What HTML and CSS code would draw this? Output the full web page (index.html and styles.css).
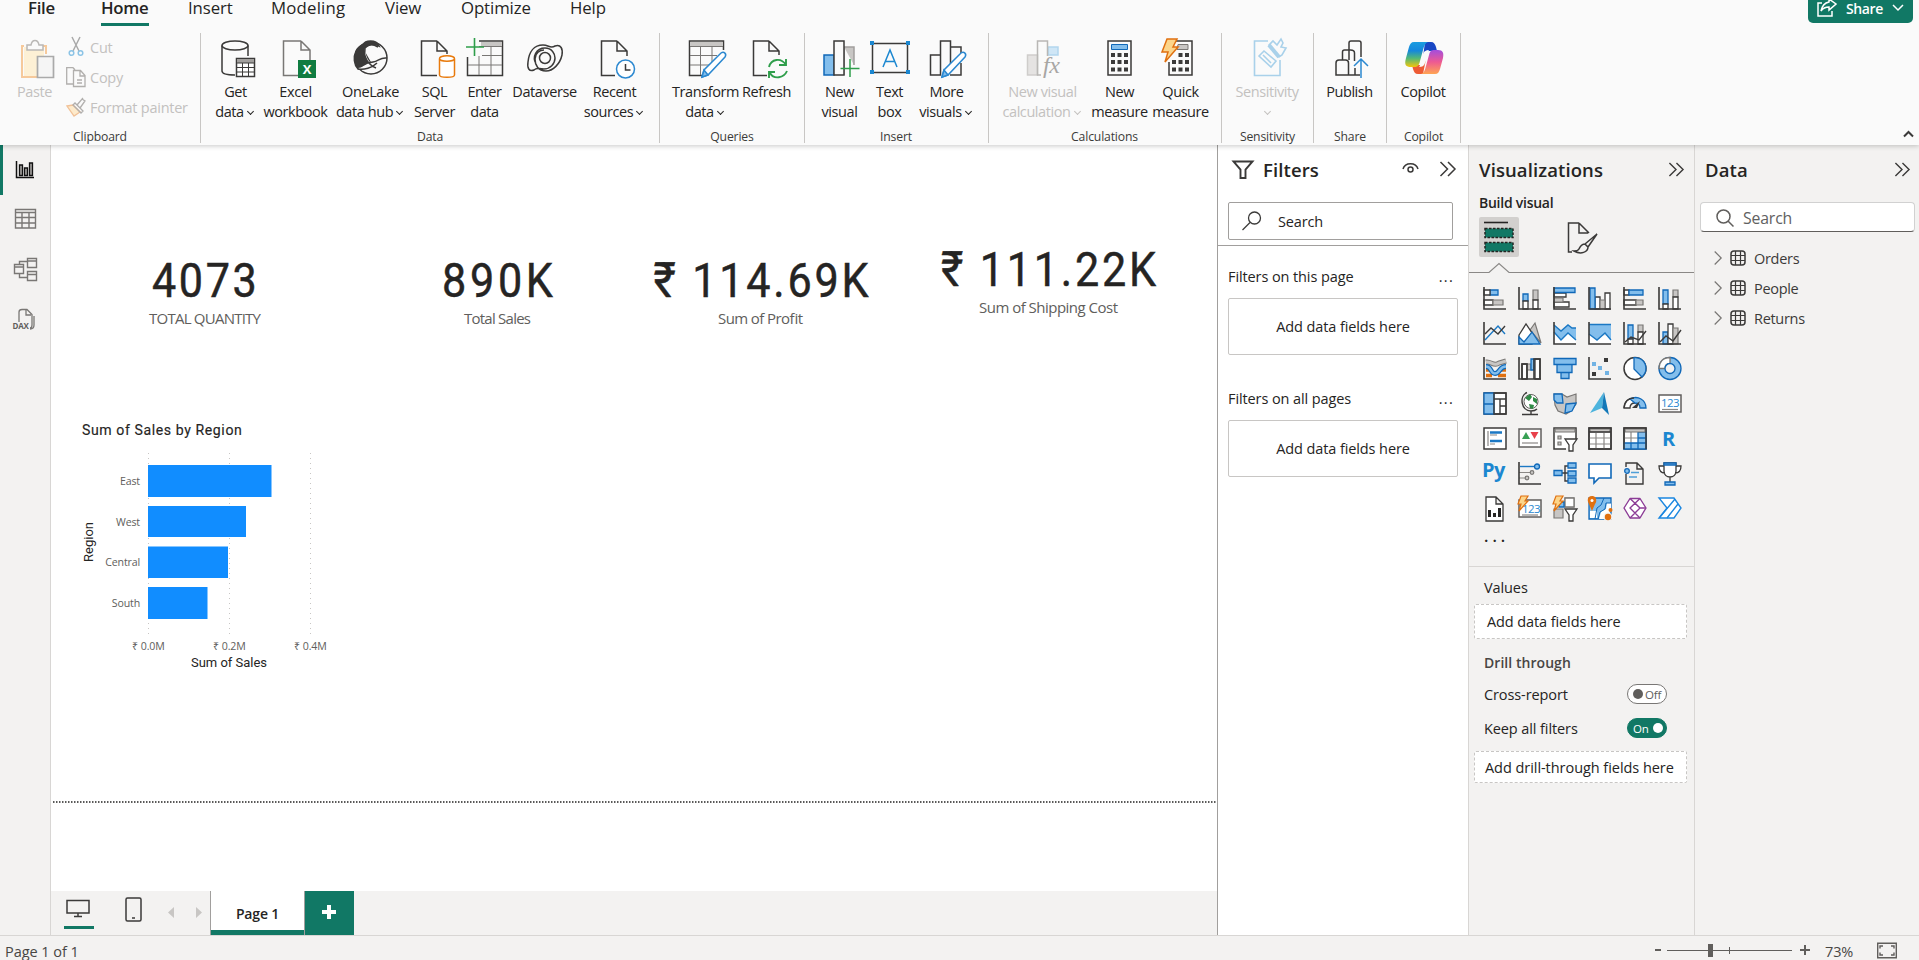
FILE: index.html
```html
<!DOCTYPE html>
<html lang="en">
<head>
<meta charset="utf-8">
<title>Power BI Desktop</title>
<link rel="stylesheet" href="styles.css">
</head>
<body>
<div class="app">
  <header class="ribbon">
    <div class="topline">
      <nav class="tabs">
        <a class="tab t-file">File</a><a class="tab t-home">Home</a><a class="tab t-insert">Insert</a><a class="tab t-model">Modeling</a><a class="tab t-view">View</a><a class="tab t-opt">Optimize</a><a class="tab t-help">Help</a>
      </nav>
      <button class="share">
        <svg width="20" height="18" viewBox="0 0 20 18" class="ln wt"><path d="M5 4H1v13h14v-5M12 0l7 5-7 6V8C8 8 6 9 4 12 5 7 7 4 12 3Z"/></svg>
        <span>Share</span>
        <svg width="12" height="8" viewBox="0 0 12 8" class="ln wt"><path d="M1 1l5 5 5-5"/></svg>
      </button>
    </div>
    <div class="groups">
      <section class="group g-clip">
        <div class="clip">
          <div class="btn off b-paste">
            <svg class="ico" viewBox="0 0 38 38"><path d="M8 6H6v31h16M27 6h3v8" fill="none" stroke="#f6c99b" stroke-width="2"/><path d="M8 7h20v9h-7v20H8Z" fill="#fdf0d5"/><path d="M11 10V5h4c1-6 7-6 8 0h4v5Z" fill="#fafafa" stroke="#b9b7b5" stroke-width="1.5"/><path d="M21.500 16.500h16v21h-16Z" fill="#f5f5f5" stroke="#aaa" stroke-width="1.700"/></svg>
            <span>Paste</span>
          </div>
          <div class="mini">
            <div class="row"><svg width="20" height="20" viewBox="0 0 20 20" fill="none"><path d="M6 0l7 14M14 0L7 14" stroke="#aaa" stroke-width="1.500"/><circle cx="5.500" cy="16" r="2.300" stroke="#8cc4e6" stroke-width="1.500"/><circle cx="14.500" cy="16" r="2.300" stroke="#8cc4e6" stroke-width="1.500"/></svg><span>Cut</span></div>
            <div class="row"><svg width="20" height="20" viewBox="0 0 20 20" fill="none" stroke="#b1afad" stroke-width="1.300"><path d="M7 17H.700V.700H7l2 2M7.500 3.500h7l4.500 5v11H7.500ZM14 3.500V9h5M11 13h5M11 16h5"/></svg><span>Copy</span></div>
            <div class="row"><svg width="20" height="20" viewBox="0 0 20 20" fill="none" stroke="#b1afad" stroke-width="1.300"><path d="M1 9l6-1 7 7-6 4Z" fill="#fdeacb" stroke="#f1c197"/><path d="M7 8l2-2 8 8-2 2ZM11 8l5-6 3 2-5 7M16 2l1-1"/></svg><span>Format painter</span></div>
          </div>
        </div>
        <div class="cap">Clipboard</div>
      </section>
      <section class="group g-data">
        <div class="btns">
          <div class="btn w48"><svg class="ico ln" viewBox="0 0 38 38"><ellipse cx="18" cy="5.500" rx="13" ry="4.500"/><path d="M5 5.500V31c0 2.500 4 4 13 4M31 5.500V16"/><path d="M19.500 18.500h18v18h-18Z" fill="#fff"/><path d="M20 19h17v4H20Z" fill="#a19f9d" stroke="none"/><path d="M19.500 23h18M19.500 27.500h18M19.500 32h18M25.500 23v14M31.500 23v14" stroke-width="1"/></svg><span>Get<br>data<i class="dd"></i></span></div>
          <div class="btn w72"><svg class="ico ln" viewBox="0 0 38 38"><path d="M24 1H6.500v34.500H21M24 1l9 9v10M24 1v9h9" stroke="#797775"/><path d="M21 20h18v18H21Z" fill="#107c41" stroke="none"/><text x="30" y="34" text-anchor="middle" class="xl">X</text></svg><span>Excel<br>workbook</span></div>
          <div class="btn w78"><svg class="ico ln" viewBox="0 0 38 38"><circle cx="19" cy="18" r="16"/><path d="M11 5C13 0 24-1 27 6 22 3 17 4 13 8v5l5 9c-7 3-10 5-12 7C2 25 1 17 4 11c2-4 4-5 7-6Z" fill="#3b3a39"/><path d="M13 8c0 10 6 18 14 20l-9 4C12 31 8 30 6 28c5 0 8-3 11-5-4-4-5-10-4-15Z" fill="#fafafa" stroke="none"/><path d="M12 8c4-4 9-4 14-1M12 8c0 11 5 17 12 20M16 23l5-1c6-1 7-5 14-4M6 29c6 1 14-1 19-6"/></svg><span>OneLake<br>data hub<i class="dd"></i></span></div>
          <div class="btn w50"><svg class="ico ln" viewBox="0 0 38 38"><path d="M21 1H5.500v34.500H21M21 1l10 10v3M21 1v10h10"/><path d="M23.500 19v16c0 3 15 3 15 0V19" fill="#fff" stroke="#e87a0c"/><ellipse cx="31" cy="18.500" rx="7.500" ry="2.800" fill="#fff" stroke="#e87a0c"/></svg><span>SQL<br>Server</span></div>
          <div class="btn w50"><svg class="ico ln" viewBox="0 0 38 38"><path d="M1.500 17v18.500h35V1H13" /><path d="M15 2h21v4.500H15Z" fill="#c8c6c4" stroke="none"/><path d="M13 6.500h23M16 15.500h20M2 25h34M13 16v19M25 7v28" stroke-width="1" stroke="#797775"/><path d="M8.500-2v18M0 7h18" stroke="#2f9e4b" stroke-width="1.600"/></svg><span>Enter<br>data</span></div>
          <div class="btn w70"><svg class="ico ln" viewBox="0 0 38 38"><circle cx="19" cy="18" r="5.500"/><path d="M10 24C6 17 10 8 19 8c7 0 10 6 10 10 0 6-5 11-11 11-6 0-7-2-10 1-5 2-7-2-6-8C3 12 8 5 17 5c6 0 7 4 12 1 6-2 8 3 7 9-2 9-9 16-16 16-8 0-11-6-11-12 0-6 5-9 9-9"/></svg><span>Dataverse</span></div>
          <div class="btn w70"><svg class="ico ln" viewBox="0 0 38 38"><path d="M21 1H5.500v34.500H19M21 1l10 10v5M21 1v10h10"/><circle cx="29.500" cy="29" r="9" fill="#fff" stroke="#2b88d0"/><path d="M29.500 24v6h5"/></svg><span>Recent<br>sources<i class="dd"></i></span></div>
        </div>
        <div class="cap">Data</div>
      </section>
      <section class="group g-query">
        <div class="btns">
          <div class="btn w70"><svg class="ico ln" viewBox="0 0 38 38"><path d="M15 35.500H2.500V1h34v9"/><path d="M3.500 2h32v4H3.500Z" fill="#c8c6c4" stroke="none"/><path d="M3 6.500h33M3 15.500h27M3 25h19M13.500 6.500V35M25 6.500V22" stroke-width="1" stroke="#797775"/><path d="M15 37l2-7 17-17c3-2 6 1 4 4L21 35Z" fill="#fff" stroke="#2b88d0"/><path d="M15 37l2-7 4 5Z" fill="#83beec" stroke="#2b88d0"/></svg><span>Transform<br>data<i class="dd"></i></span></div>
          <div class="btn w52"><svg class="ico ln" viewBox="0 0 38 38"><path d="M21 1H5.500v34.500H19M21 1l10 10v4M21 1v10h10"/><path d="M21 27c2-8 12-10 17-2M38 19v6h-7M39 31c-3 7-13 9-17 2M21 38v-6h6" stroke="#2f9e4b" stroke-width="1.900"/></svg><span>Refresh</span></div>
        </div>
        <div class="cap">Queries</div>
      </section>
      <section class="group g-insert">
        <div class="btns">
          <div class="btn w50"><svg class="ico ln" viewBox="0 0 38 38"><path d="M23 7h10v18M23 35V7" fill="#c8c6c4" stroke="#a19f9d"/><path d="M3 15h10v20H3Z" fill="#83beec" stroke="#1068b8"/><path d="M13 1h10v34H13Z" fill="#fafafa"/><path d="M29 19v18M19.500 28.500h19" stroke="#2f9e4b"/></svg><span>New<br>visual</span></div>
          <div class="btn w50"><svg class="ico ln" viewBox="0 0 38 38"><path d="M1.500 3.500h35v29h-35Z"/><g fill="#1b87d0" stroke="none"><path d="M-1 1h4v4h-4zM35 1h4v4h-4zM-1 30h4v4h-4zM35 30h4v4h-4z"/></g><path d="M12 27l7-17 7 17M14.500 21.500h9" stroke="#1b87d0"/></svg><span>Text<br>box</span></div>
          <div class="btn w64"><svg class="ico ln" viewBox="0 0 38 38"><path d="M2.500 15h10v20h-10ZM23 7h10v9M12.500 35V1h10v24M33 23v12H22"/><path d="M14 37l2-7 17-17c3-2 6 1 4 4L20 35Z" fill="#fff" stroke="#2b88d0"/><path d="M14 37l2-7 4 5Z" fill="#83beec" stroke="#2b88d0"/></svg><span>More<br>visuals<i class="dd"></i></span></div>
        </div>
        <div class="cap">Insert</div>
      </section>
      <section class="group g-calc">
        <div class="btns">
          <div class="btn off w88"><svg class="ico ln" viewBox="0 0 38 38"><path d="M24 7h10v8H24Z" fill="#cfe6f6" stroke="#b3d6ee"/><path d="M3.500 15h10v20h-10Z" fill="#e5e3e2" stroke="#cfcdcb"/><path d="M17 35h-3.500V1h10v15" stroke="#b9b7b5"/><text x="19" y="33" class="fx">fx</text></svg><span>New visual<br>calculation<i class="dd"></i></span></div>
          <div class="btn w66"><svg class="ico ln" viewBox="0 0 38 38"><path d="M7 1h23v34H7Z"/><path d="M10.500 4.500h16v5h-16Z" fill="#83beec" stroke="#1068b8" stroke-width="1"/><path d="M10 15h17M10 22h17M10 29.500h17" stroke-width="4" stroke-dasharray="4 2.500"/></svg><span>New<br>measure</span></div>
          <div class="btn w56"><svg class="ico ln" viewBox="0 0 38 38"><path d="M14 1h16v34H7V22"/><path d="M16 4.500h10v5H15Z" fill="#c8c6c4" stroke="#797775" stroke-width="1"/><path d="M16.500 15h10.500M10 22h17M10 29.500h17" stroke-width="4" stroke-dasharray="4 2.500"/><path d="M5-1h10l-4 8h5L3 22l3-10H0Z" fill="#fcd58a" stroke="#e07010" stroke-width="1.500"/></svg><span>Quick<br>measure</span></div>
        </div>
        <div class="cap">Calculations</div>
      </section>
      <section class="group g-sens">
        <div class="btns"><div class="btn off w92"><svg class="ico" viewBox="0 0 38 38" fill="none" stroke="#a9d1ea" stroke-width="1.600"><path d="M19 1H5.500v34.500H31V20M10 16l5-5 12 10-5 6ZM14 15l8 8"/><path d="M20 5l4-4 4 4 4-6 2 4-2 4 5 1-4 7-3 2Z"/><path d="M20 5l10 12" stroke-width="4"/></svg><span>Sensitivity<br><i class="dd"></i></span></div></div>
        <div class="cap">Sensitivity</div>
      </section>
      <section class="group g-share">
        <div class="btns"><div class="btn w73"><svg class="ico ln" viewBox="0 0 38 38"><path d="M18 20V3c0-1 1-2 2-2h8c1 0 2 1 2 2v14M11.500 20v-8c0-1 1-2 2-2h6c3 0 4 1 4 3v8M17.500 35V23c0-2-1-3-3-3H8c-2 0-3 1-3 3v12h24M24 28v7"/><path d="M30 38V19M23 26l7-7 7 7" stroke="#2b88d0"/></svg><span>Publish</span></div></div>
        <div class="cap">Share</div>
      </section>
      <section class="group g-copilot">
        <div class="btns"><div class="btn w73"><svg class="ico" viewBox="0 0 38 38">
          <defs><linearGradient id="ca" x1="0" y1="0" x2="0" y2="1"><stop offset="0" stop-color="#1a9de0"/><stop offset=".35" stop-color="#1587dc"/><stop offset=".65" stop-color="#52b878"/><stop offset="1" stop-color="#f4c60b"/></linearGradient><linearGradient id="cb" x1="0" y1="0" x2="0" y2="1"><stop offset="0" stop-color="#a34ddd"/><stop offset=".5" stop-color="#ee5a92"/><stop offset="1" stop-color="#ffa553"/></linearGradient></defs>
          <path d="M20 2h6c3 0 4 2 5 5l1 4h-8c-3 0-5 2-6 6Z" fill="#1746c4"/><path d="M18 34h-5c-3 0-4-2-5-5l-1-4h8c3 0 5-2 6-6Z" fill="#ed5b35"/>
          <path d="M9 2h14c-3 1-4 4-5 8l-3 11c-1 4-2 6-6 6H6c-5 0-7-2-5-9L4 7c1-3 2-5 5-5Z" fill="url(#ca)"/><path d="M30 34H16c3-1 4-4 5-8l3-11c1-4 2-5 6-5h3c5 0 6 3 5 8l-3 11c-1 3-2 5-5 5Z" fill="url(#cb)"/><path d="M18 14c1-3 3-4 6-4-1 1-1 3-1 5l-3 8c-1 3-3 4-6 4 1-1 1-2 2-5Z" fill="#fafafa"/></svg><span>Copilot</span></div></div>
        <div class="cap">Copilot</div>
      </section>
      <svg class="collapse ln" width="11" height="8" viewBox="0 0 11 8"><path d="M1 6.500L5.500 2 10 6.500" stroke-width="2"/></svg>
    </div>
  </header>

  <div class="work">
    <aside class="rail">
      <div class="nav sel"><svg width="24" height="24" viewBox="0 0 24 24" fill="#a19f9d" stroke="#111" stroke-width="1.300"><path d="M2.500 3v16.500H20" fill="none" stroke-width="1.500"/><path d="M5.500 7h3v10.500h-3ZM10.500 10h3v7.500h-3ZM15.500 5h3v12.500h-3Z"/></svg></div>
      <div class="nav"><svg width="24" height="24" viewBox="0 0 24 24" fill="none" stroke="#797775" stroke-width="1.400"><path d="M2.500 1.500h20v18.500h-20ZM2.500 4.500h20M2.500 9.500h20M2.500 15h20M9 5v15M16 5v15"/></svg></div>
      <div class="nav"><svg width="24" height="24" viewBox="0 0 24 24" fill="none" stroke="#797775" stroke-width="1.400"><path d="M14.500.500h9v9h-9ZM14.500 3h9M14.500 13.500h9v9h-9ZM14.500 16.500h9M1.500 6.500h9v9h-9ZM1.500 9h9M6.500 6V3.500h8M6.500 15.500v4h8"/></svg></div>
      <div class="nav"><svg width="24" height="24" viewBox="0 0 24 24" fill="none" stroke="#797775" stroke-width="1.300"><path d="M6 14V4c0-2 1-2.500 3-2.500h5l5 5V17c0 2-1 3-2 3M13 2v5h5M21 8v9c0 3-2 4-4 4"/><text x="-.500" y="21" class="dax">DAX</text></svg></div>
    </aside>

    <main class="center">
      <div class="canvas">
        <svg width="1166" height="746" viewBox="51 145 1166 746" class="report">
          <g class="kpi">
            <text transform="translate(152 296.500) scale(.88 1)" textLength="119">4073</text>
            <text transform="translate(442 296.500) scale(.88 1)" textLength="126">890K</text>
            <text transform="translate(653.500 296.500) scale(.88 1)" textLength="244.500">₹ 114.69K</text>
            <text transform="translate(941 285.500) scale(.88 1)" textLength="244.500">₹ 111.22K</text>
          </g>
          <g class="kpi-l">
            <text x="149" y="324" textLength="112">TOTAL QUANTITY</text>
            <text x="464" y="324" textLength="67">Total Sales</text>
            <text x="718" y="324" textLength="85">Sum of Profit</text>
            <text x="979" y="313" textLength="139">Sum of Shipping Cost</text>
          </g>
          <text transform="translate(82 435) scale(.94 1)" textLength="170" class="ttl">Sum of Sales by Region</text>
          <path d="M148.500 453v184M229.500 453v184M310.500 453v184" class="grid"/>
          <g fill="#118dff"><path d="M148 465h123.500v32H148ZM148 506h98v31h-98ZM148 546.500h80v31.500h-80ZM148 587h59.500v32H148Z"/></g>
          <g class="ax" text-anchor="end">
            <text x="140" y="485">East</text><text x="140" y="526">West</text><text x="140" y="566">Central</text><text x="140" y="607">South</text>
          </g>
          <g class="ax" text-anchor="middle">
            <text x="148.500" y="650">₹ 0.0M</text><text x="229.500" y="650">₹ 0.2M</text><text x="310.500" y="650">₹ 0.4M</text>
          </g>
          <text x="191" y="667" textLength="76" class="axt">Sum of Sales</text>
          <text transform="translate(93 562) rotate(-90)" textLength="40" class="axt">Region</text>
          <path d="M53 802h1164" class="edge"/>
        </svg>
      </div>
      <div class="pages">
        <div class="dev on"><svg width="26" height="20" viewBox="0 0 26 20" class="ln"><path d="M1 1.500h22v12.500h-22ZM12 14.500v3M8 17.500h8"/></svg></div>
        <div class="dev ph"><svg width="18" height="26" viewBox="0 0 18 26" class="ln"><rect x="1" y="1" width="15" height="23" rx="1.500"/><path d="M7 21h3"/></svg></div>
        <svg class="arrows" width="34" height="12" viewBox="0 0 34 12" fill="#c8c6c4"><path d="M6 0v11L0 5.500ZM28 0v11l6-5.500Z"/></svg>
        <div class="page">Page 1</div>
        <div class="add"><svg width="14" height="14" viewBox="0 0 14 14"><path d="M7 0v14M0 7h14" stroke="#fff" stroke-width="4"/></svg></div>
      </div>
    </main>

    <aside class="filters">
      <div class="fhead"><svg width="22" height="20" viewBox="0 0 22 20" class="ln"><path d="M1.500 1.500h19l-7 8V18h-5V9.500Z" stroke-width="1.900"/></svg><h2>Filters</h2>
        <svg class="eye ln" width="17" height="12" viewBox="0 0 17 12"><path d="M1 7c2-7 13-7 15 0"/><circle cx="8.500" cy="7.500" r="2.500"/></svg>
        <svg class="ln" width="17" height="16" viewBox="0 0 17 16"><path d="M.500 0l7 7-7 7M8 0l7 7-7 7"/></svg></div>
      <div class="fsearch"><svg width="20" height="20" viewBox="0 0 20 20" class="ln"><circle cx="12.500" cy="7" r="6" stroke-width="1.300"/><path d="M8 11.500L.500 19" stroke-width="1.300"/></svg><span>Search</span></div>
      <div class="fsec"><div class="flab"><span>Filters on this page</span><b>...</b></div><div class="fbox">Add data fields here</div></div>
      <div class="fsec two"><div class="flab"><span>Filters on all pages</span><b>...</b></div><div class="fbox">Add data fields here</div></div>
    </aside>

    <aside class="viz">
      <div class="vhead"><h2>Visualizations</h2><svg class="ln" width="16" height="16" viewBox="0 0 17 16"><path d="M1.500.500l7 7-7 7M9 .500l7 7-7 7"/></svg></div>
      <div class="bv">Build visual</div>
      <div class="modes">
        <div class="mode"><svg width="40" height="40" viewBox="0 0 40 40"><path d="M5 5.500h24" stroke="#252423" stroke-width="1.600"/><g fill="#117865" stroke="#252423" stroke-width="1.500" stroke-dasharray="2.500 1.500"><path d="M6 11.500h28v9H6ZM6 25.500h28v9H6Z"/></g></svg></div>
        <svg class="fmt ln" width="32" height="32" viewBox="0 0 32 32"><path d="M12 1H1.500v29H5M12 1l10 10M12 1v10h9"/><path d="M30 12L18 22l3 3ZM18 22c-4 0-5 3-6 5s-3 2-5 2c7 4 14 1 14-4"/></svg>
      </div>
      <svg class="notch" width="225" height="12" viewBox="0 0 225 12"><path d="M0 10.500h20l10-9 10 9h185" fill="none" stroke="#8a8886" stroke-width="1.200"/></svg>
      <div class="icons">
        <svg viewBox="0 0 24 24"><path class="b" d="M7 3h8v5H7Z"/><path class="w" d="M1 3h6v5H1ZM1 13h9v5H1Z"/><path class="g" d="M10 13h10v5H10Z"/><path class="k" d="M1 0v22h22"/></svg>
        <svg viewBox="0 0 24 24"><path class="b" d="M5 7h5v7H5Z"/><path class="g" d="M15 3h5v10h-5Z"/><path class="w" d="M5 14h5v8H5ZM15 13h5v9h-5Z"/><path class="k" d="M1 0v22h22"/></svg>
        <svg viewBox="0 0 24 24"><path class="w" d="M1 6h12v4H1ZM1 15h15v5H1Z"/><path class="g" d="M1 11h9v4H1Z"/><path class="b" d="M1 1h21v4.500H1Z"/><path class="k" d="M1 0v22h22"/></svg>
        <svg viewBox="0 0 24 24"><path class="w" d="M7 10h5v12H7ZM17 6h5v16h-5Z"/><path class="g" d="M12 13h5v9h-5Z"/><path class="b" d="M2 1h5v21H2Z"/><path class="k" d="M1 0v22h22"/></svg>
        <svg viewBox="0 0 24 24"><path class="w" d="M1 3h5v5H1ZM1 13h12v5H1Z"/><path class="b" d="M6 3h14v5H6Z"/><path class="g" d="M13 13h7v5h-7Z"/><path class="k" d="M1 0v22h22"/></svg>
        <svg viewBox="0 0 24 24"><path class="b" d="M5 3h5v14H5Z"/><path class="g" d="M15 3h5v7h-5Z"/><path class="w" d="M5 17h5v5H5ZM15 10h5v12h-5Z"/><path class="k" d="M1 0v22h22"/></svg>

        <svg viewBox="0 0 24 24"><path class="bl" d="M2 18L15 4l7 8"/><path class="kl" d="M2 12l6-6 7 6 7-8"/><path class="k" d="M1 0v22h22"/></svg>
        <svg viewBox="0 0 24 24"><path class="g" d="M12 8l5-7 6 20Z"/><path class="w" d="M1 13L8 2l6 9v11H1Z"/><path class="b" d="M1 15l5 5 8-10 8 12H1Z"/></svg>
        <svg viewBox="0 0 24 24"><path d="M1 12l8 6 6-7 8 8v3H1Z" fill="#fff"/><path d="M1 3l7 6 7-6 4 3h4v12l-8-7-7 7-7-8Z" fill="#83beec"/><path class="bl" d="M1 3l7 6 7-6 4 3h4M23 18l-8-7-7 7-7-8"/><path class="k" d="M1 0v22h22"/></svg>
        <svg viewBox="0 0 24 24"><path d="M1 14h22v8H1Z" fill="#fff"/><path d="M1 2.500h22V18l-6-7-8 7-8-6Z" fill="#83beec"/><path class="bl" d="M1 2.500h22M23 18l-6-7-8 7-8-6"/><path class="k" d="M1 0v22h22"/></svg>
        <svg viewBox="0 0 24 24"><path class="b" d="M5 3h5v14H5Z"/><path class="g" d="M15 3h5v7h-5Z"/><path class="w" d="M5 17h5v5H5ZM15 10h5v12h-5Z"/><path class="kl" d="M2 20l6-5 8 3 7-9"/><path class="k" d="M1 0v22h22"/></svg>
        <svg viewBox="0 0 24 24"><path class="b" d="M5 10h5v12H5Z"/><path class="w" d="M10 2h5v20h-5Z"/><path class="g" d="M15 6h5v16h-5Z"/><path class="kl" d="M2 20l6-6 7 5 8-11"/><path class="k" d="M1 0v22h22"/></svg>

        <svg viewBox="0 0 24 24"><path d="M3 13h4M3 18.500h6M15 18.500h8M16 13h7" fill="none" stroke="#e07010" stroke-width="3.500"/><path d="M3 5c5-1 8 5 13 1l7-2" fill="none" stroke="#797775" stroke-width="5"/><path d="M3 5c5-1 8 5 13 1l7-2" fill="none" stroke="#c8c6c4" stroke-width="3"/><path d="M3 9.500c6 0 4 7 9 7s4-7 11-7" fill="none" stroke="#1068b8" stroke-width="5"/><path d="M3 9.500c6 0 4 7 9 7s4-7 11-7" fill="none" stroke="#83beec" stroke-width="2.500"/><path class="k" d="M1 0v22h22"/></svg>
        <svg viewBox="0 0 24 24"><path class="w" d="M4 7h5v15H4ZM17 2h5v20h-5Z"/><path class="g" d="M9 7h4v6H9Z"/><path class="b" d="M13 2h3v11h-3Z"/><path class="k" d="M1 0v22h22M4 22V7h5v15M16 22V2h6v20"/></svg>
        <svg viewBox="0 0 24 24"><path class="b" d="M1 1.500h22V7.500H1ZM4 7.500h15v8H4ZM8 15.500h8v6H8Z"/></svg>
        <svg viewBox="0 0 24 24"><path fill="#71b3e4" d="M4 5h4v4H4ZM10 9h4v4h-4ZM17 14h4v4h-4Z"/><path fill="#3b3a39" d="M16 1h4v4h-4ZM4 15h4v4H4Z"/><path class="k" d="M1 0v22h22"/></svg>
        <svg viewBox="0 0 24 24"><circle cx="12" cy="11.500" r="11" fill="#fff" stroke="#3b3a39" stroke-width="1.500"/><path class="b" d="M11 .700V12l8 8C27 12 22 0 11 .700Z"/></svg>
        <svg viewBox="0 0 24 24"><circle cx="12" cy="11.500" r="11" class="b"/><path class="w gs" d="M12 .500C5 .500 1 5 1 11.500h6c0-3 2-5 5-5Z"/><circle cx="12" cy="11.500" r="5" fill="#f3f2f1" stroke="#1068b8" stroke-width="1.300"/></svg>

        <svg viewBox="0 0 24 24"><path class="w" d="M1 1h22v21H1Z"/><path class="b" d="M1 1h10v21H1ZM1 12h10"/><path class="kl" d="M11 1h12v21H11ZM11 7h12M17 7v15M17 14h6"/></svg>
        <svg viewBox="0 0 24 24"><circle cx="13" cy="9.500" r="7" fill="#fff" stroke="#605e5c"/><path d="M7 6l5-4 2 3-3 4ZM15 5l4 2v5l-4-3ZM11 12l5 1-1 4-3-1Z" fill="#2e8b45"/><path class="kl" d="M9 .500C1 4 3 19 13 19c3 0 5-1 6-2M13 19v3M4 22.500h16"/></svg>
        <svg viewBox="0 0 24 24"><path class="g" d="M1 2h8l5 3 9-3 0 10-5 7-5 3-8-3-3-6Z"/><path class="b" d="M1 2h8l1 9H4L1 8ZM13 12l10-1-4 8-7 2Z"/></svg>
        <svg viewBox="0 0 24 24"><path d="M16 0L2 21l12-5Z" fill="#4db4dd"/><path d="M16 0l5 23-7-7Z" fill="#1278b8"/></svg>
        <svg viewBox="0 0 24 24"><path class="w" d="M1 16C1 9 6 6 11 6l1 5c-4 0-5 2-5 5Z"/><path class="b" d="M7 7c8-4 16 1 16 9h-6c0-3-1-5-5-5Z"/><path class="kl" d="M1 16C2 8 7 6 11 6"/><path d="M9 16h5l3-7-7 6Z" fill="#3b3a39"/></svg>
        <svg viewBox="0 0 24 24"><path class="gx" d="M1 3h22v17H1Z"/><text x="3" y="14.500" class="n">123</text><path class="gl" d="M4 17.500h16"/></svg>

        <svg viewBox="0 0 24 24"><path class="kx" d="M1 1h22v21H1Z"/><path class="gl" d="M5 4v15M7 8h7M7 17h5"/><path d="M7 5.500h12M7 14h12" stroke="#1b78c4" stroke-width="2.500"/></svg>
        <svg viewBox="0 0 24 24"><path class="gx" d="M1 2h22v18H1Z"/><path d="M4 12l4-7 4 7Z" fill="#38a054"/><path d="M12.500 5h8l-4 7Z" fill="#e8414c"/><path class="gl" d="M4 16h16"/></svg>
        <svg viewBox="0 0 24 24"><path class="kx" d="M13 22H1V1h22v11"/><path class="g" d="M2 2h20v3H2ZM5 9h3v3H5ZM5 15h3v3H5Z"/><path class="w" d="M12 12h12l-4 6v6h-4v-6Z"/></svg>
        <svg viewBox="0 0 24 24"><path class="kx" d="M1 1h22v21H1Z"/><path class="gl" d="M1 11h22M1 17h22M8 6v16M16 6v16"/><path class="g" d="M2 2h20v3H2Z"/><path class="kl" d="M1 1h22v21H1ZM1 5h22"/></svg>
        <svg viewBox="0 0 24 24"><path class="kx" d="M1 1h22v21H1Z"/><path class="gl" d="M1 11h14M8 5v11"/><path class="b" d="M15 5h8v17H1v-6h14ZM15 11h8M8 16v6M15 16h8M15 16v6"/><path class="g" d="M2 2h20v3H2Z"/><path class="kl" d="M1 22V1h22v21"/></svg>
        <svg viewBox="0 0 24 24"><text x="4" y="19" class="rp">R</text></svg>

        <svg viewBox="0 0 24 24"><text x="-1" y="15" class="rp">Py</text></svg>
        <svg viewBox="0 0 24 24"><path class="bl" d="M2 4.500h14"/><path class="gl" d="M1 10.500h13M1 16h7"/><circle class="b" cx="19" cy="4.500" r="2.500"/><circle cx="14" cy="10.500" r="1.800" class="g"/><circle cx="9" cy="16" r="1.800" class="g"/><path class="k" d="M1 0v22h22"/></svg>
        <svg viewBox="0 0 24 24"><path class="kl" d="M9 11h6M15 4h-3v15h3"/><path class="b" d="M1 8.500h8v5H1ZM15 1h8v5h-8ZM15 9h8v5h-8ZM15 16h8v5h-8Z"/></svg>
        <svg viewBox="0 0 24 24"><path class="w bs" d="M1 2h22v14H11l-5 5v-5H1Z"/></svg>
        <svg viewBox="0 0 24 24"><path class="kl" d="M3 5V1h11l6 6v15H3V12M14 1v6h6"/><circle class="b" cx="4" cy="9" r="2.300"/><path d="M8 10.500h8M6 15h8" stroke="#4f9fd8" stroke-width="1.500"/></svg>
        <svg viewBox="0 0 24 24"><path class="w" d="M6 1h12v8c0 4-3 6-6 6s-6-2-6-6ZM6 4H1c0 5 2 7 6 7M18 4h5c0 5-2 7-6 7M12 15v5"/><path class="b" d="M6 1h12v2H6ZM7 20h10v3H7Z"/></svg>

        <svg viewBox="0 0 24 24"><path class="w" d="M3 0h10l7 7v17H3ZM13 0v7h7"/><path d="M5 13h3v7H5ZM10 16h3v4h-3ZM15 11h3v9h-3Z" fill="#252423"/></svg>
        <svg viewBox="0 0 24 24"><path class="gx" d="M1 3h22v17H1Z"/><text x="4" y="16" class="n">123</text><path class="gl" d="M4 18h16"/><path class="z" d="M3-1h7L7 4h3L1 14l2-7H0Z"/></svg>
        <svg viewBox="0 0 24 24"><path class="g" d="M12 1h9v9h-9ZM1 12h9v9H1Z"/><path class="w gs" d="M12 1h9v9h-9Z"/><path class="b" d="M6 5h5v5H6Z"/><path class="w" d="M12 12h12l-4 6v6h-4v-6Z"/><path class="z" d="M3-1h7L7 4h3L1 14l2-7H0Z"/></svg>
        <svg viewBox="0 0 24 24"><path class="b" d="M1 1h22v21H1Z"/><path d="M11 22l2-7 5-3 1-6h4v8l-6 8ZM2 14h7v7H2Z" fill="#fff"/><path d="M16 1l-3 7-4 3-2 11M23 6h-5l-1 6-5 3-2 7" fill="none" stroke="#1068b8"/><path d="M4-1c5 0 5 6 3 8l-3 7-3-7C-1 4-1-1 4-1Z" fill="#e07010"/><circle cx="4" cy="3.500" r="1.500" fill="#fff"/><circle cx="20" cy="20" r="4.500" fill="#f3f2f1"/><circle cx="20" cy="20" r="3.200" fill="#e07010"/><circle cx="22.500" cy="13" r="2" fill="#e07010"/></svg>
        <svg viewBox="0 0 24 24" fill="none" stroke="#8c3c96" stroke-width="1.400" stroke-linejoin="round"><path d="M7 1.500h10l6 9.500-6 10H7l-6-10Z" fill="#fff"/><path d="M7 1.500L17 11l-5 5-5-5L17 1.500M17 11l5 0M7 21l5-5 5 5M12 6l5 5"/></svg>
        <svg viewBox="0 0 24 24" fill="#fff" stroke="#1b87e0" stroke-width="1.400"><path d="M1 1h15l7 10-7 10H1l8-10Z"/><path d="M2 20L17 2M9 21l11-14" fill="none"/></svg>
      </div>
      <div class="more">...</div>
      <div class="wells">
        <div class="wl">Values</div>
        <div class="well">Add data fields here</div>
        <div class="wl dt">Drill through</div>
        <div class="trow"><span>Cross-report</span><div class="tog"><i></i>Off</div></div>
        <div class="trow"><span>Keep all filters</span><div class="tog on">On<i></i></div></div>
        <div class="well w2">Add drill-through fields here</div>
      </div>
    </aside>

    <aside class="data">
      <div class="vhead dh"><h2>Data</h2><svg class="ln" width="16" height="16" viewBox="0 0 17 16"><path d="M1.500.500l7 7-7 7M9 .500l7 7-7 7"/></svg></div>
      <div class="dsearch"><svg width="18" height="18" viewBox="0 0 18 18" class="ln gr"><circle cx="7.500" cy="7.500" r="6.500"/><path d="M12 12l5.500 5.500"/></svg><span>Search</span></div>
      <div class="tree">
        <div class="item"><svg width="32" height="16" viewBox="0 0 32 16" class="ln"><path d="M.700 1.500l6.500 6.500-6.500 6.500" stroke="#797775" stroke-width="1.200"/><rect x="17" y="1" width="14" height="14" rx="3"/><path d="M17 5.500h14M17 10.500h14M21.500 1v14M26.500 1v14" stroke-width="1.200"/></svg><span>Orders</span></div>
        <div class="item"><svg width="32" height="16" viewBox="0 0 32 16" class="ln"><path d="M.700 1.500l6.500 6.500-6.500 6.500" stroke="#797775" stroke-width="1.200"/><rect x="17" y="1" width="14" height="14" rx="3"/><path d="M17 5.500h14M17 10.500h14M21.500 1v14M26.500 1v14" stroke-width="1.200"/></svg><span>People</span></div>
        <div class="item"><svg width="32" height="16" viewBox="0 0 32 16" class="ln"><path d="M.700 1.500l6.500 6.500-6.500 6.500" stroke="#797775" stroke-width="1.200"/><rect x="17" y="1" width="14" height="14" rx="3"/><path d="M17 5.500h14M17 10.500h14M21.500 1v14M26.500 1v14" stroke-width="1.200"/></svg><span>Returns</span></div>
      </div>
    </aside>
  </div>

  <footer class="status">
    <span class="pg">Page 1 of 1</span>
    <svg width="156" height="16" viewBox="0 0 156 16" fill="none" stroke="#605e5c"><path d="M0 7h6M145 7h10M150 2v10" stroke-width="2"/><path d="M12 7.500h125M74.500 4v7"/><path d="M55.500 1v13" stroke-width="5"/></svg>
    <span class="pct">73%</span>
    <svg width="20" height="16" viewBox="0 0 20 16" fill="none" stroke="#605e5c" stroke-width="1.400"><path d="M.700.200h18.600v14.600H.700ZM3 5.500V3h3M14 3h3v2.500M3 9.500V12h3M14 12h3V9.500"/></svg>
  </footer>
</div>
</body>
</html>
```
FILE: styles.css
```css
* { box-sizing: border-box; }
body { margin: 0; font-family: "Open Sans", "Noto Sans", sans-serif; font-size: 14.5px; letter-spacing: -0.16px; color: #252423; overflow: hidden; }
svg { overflow: visible; display: block; flex: none; }
h2 { margin: -2px 0 0; font-size: 18.5px; font-weight: 600; letter-spacing: 0.1px; }
.app { width: 1919px; height: 960px; display: flex; flex-direction: column; background: #f3f2f1; }
.ln { fill: none; stroke: #3b3a39; stroke-width: 1.5; }
.wt { stroke: #fff; }
.gr { stroke: #605e5c; }

.ribbon { height: 145px; background: #fafafa; box-shadow: 0 1px 5px rgba(0,0,0,.22); position: relative; z-index: 2; flex: none; }
.topline { display: flex; justify-content: space-between; height: 33px; }
.tabs { display: flex; padding-left: 28px; }
.tab { height: 26px; line-height: 15px; font-size: 16.8px; letter-spacing: -0.1px; white-space: nowrap; }
.t-file { width: 27px; margin-right: 46px; font-weight: 600; letter-spacing: -0.3px; }
.t-home { width: 48px; margin-right: 39px; font-weight: 600; letter-spacing: -0.3px; border-bottom: 3px solid #117865; }
.t-insert { width: 43px; margin-right: 40px; }
.t-model { width: 74px; margin-right: 40px; letter-spacing: .2px; }
.t-view { width: 36px; margin-right: 40px; }
.t-opt { width: 69px; margin-right: 40px; }
.share { width: 105px; height: 23px; margin: 0 6px 0 0; padding: 0 11px 7px 9px; border: 0; border-radius: 0 0 5px 5px; background: #117865; color: #fff; display: flex; align-items: center; gap: 9px; font: 600 14px "Open Sans", sans-serif; letter-spacing: -0.4px; }
.share span { width: 37px; }
.groups { display: flex; height: 111px; }
.group { height: 110px; border-right: 1px solid #c8c6c4; display: flex; flex-direction: column; justify-content: space-between; }
.g-clip { width: 201px; }
.g-data { width: 459px; padding-left: 11px; }
.g-query { width: 145px; padding-left: 11px; }
.g-insert { width: 184px; padding-left: 10px; }
.g-calc { width: 233px; padding-left: 10px; }
.g-sens { width: 92px; }
.g-share { width: 73px; }
.g-copilot { width: 74px; }
.btns { display: flex; padding-top: 7px; }
.btn { display: flex; flex-direction: column; align-items: center; text-align: center; line-height: 20px; letter-spacing: -0.42px; white-space: nowrap; }
.btn span { margin-top: 4px; margin-left: -1px; }
.btn .ico { width: 38px; height: 38px; }
.off { color: #c3c1bf; }
.w48 { width: 48px; } .w50 { width: 50px; } .w52 { width: 52px; } .w56 { width: 56px; } .w64 { width: 64px; } .w66 { width: 66px; } .w70 { width: 70px; } .w72 { width: 72px; } .w73 { width: 73px; } .w78 { width: 78px; } .w88 { width: 88px; } .w92 { width: 92px; }
.dd { display: inline-block; width: 5px; height: 5px; border: solid currentColor; border-width: 0 1.6px 1.6px 0; transform: rotate(45deg); margin: 0 3px 3px 4px; }
.cap { text-align: center; font-size: 12.2px; line-height: 16px; color: #3b3a39; margin-bottom: -2px; }
.g-data .cap, .g-query .cap, .g-insert .cap, .g-calc .cap { margin-left: -11px; }
.xl { font: 700 13px "Open Sans"; fill: #fff; stroke: none; }
.fx { font: italic 24px "Liberation Serif"; fill: #a8a6a4; stroke: none; }
.dax { font: 700 8px "Open Sans"; fill: #605e5c; stroke: none; }
.clip { display: flex; height: 86px; padding-top: 4px; }
.b-paste { width: 66px; padding: 3px 0 0 4px; }
.mini { display: flex; flex-direction: column; margin-top: -5px; letter-spacing: -0.25px; }
.row { display: flex; align-items: center; gap: 4px; height: 30px; flex: none; color: #c3c1bf; white-space: nowrap; }
.collapse { margin: 97px 0 0 442px; }

.work { display: flex; height: 790px; }
.rail { width: 51px; border-right: 1px solid #d8d6d4; }
.nav { height: 50px; display: flex; align-items: center; padding-left: 13px; }
.nav.sel { border-left: 3px solid #117865; padding-left: 11px; }
.center { width: 1166px; display: flex; flex-direction: column; }
.canvas { height: 746px; background: #fff; }
.kpi text { font: 49px Roboto, sans-serif; fill: #252423; stroke: #252423; stroke-width: .5; }
.kpi-l text { font: 15px "Open Sans", sans-serif; fill: #605e5c; }
.ttl { font: 15px Roboto, sans-serif; fill: #252423; stroke: #252423; stroke-width: .15; }
.axt { font: 13px Roboto, sans-serif; fill: #252423; }
.ax { font: 10.6px "Open Sans", sans-serif; fill: #605e5c; }
.report text { letter-spacing: 0; }
.report .ax text { letter-spacing: -0.15px; }
.grid { stroke: #c8c6c4; stroke-dasharray: 1 4; }
.edge { stroke: #252423; stroke-width: 1.5; stroke-dasharray: 1.5 1.5; }
.pages { height: 44px; display: flex; }
.dev { margin-left: 13px; width: 30px; height: 38px; padding: 8px 2px; }
.dev.on { border-bottom: 3px solid #117865; }
.dev.ph { margin-left: 31px; width: 19px; padding: 6px 0; }
.arrows { margin: 16px 8px 0 24px; }
.page { width: 95px; background: #fff; border: 1px solid #a19f9d; border-width: 0 1px; box-shadow: inset 0 -5px #117865; text-align: center; line-height: 45px; font-weight: 600; font-size: 14px; }
.add { width: 49px; background: #117865; display: flex; justify-content: center; align-items: center; padding: 0 1px 3px 0; }

.filters { width: 251px; background: #fff; border-left: 1px solid #a19f9d; }
.fhead { display: flex; align-items: center; height: 50px; padding: 0 11px 0 14px; }
.fhead h2 { margin-left: 9px; width: 140px; }
.eye { margin: -4px 21px 0 0; }
.fsearch { margin: 7px 0 0 10px; width: 225px; height: 38px; border: 1px solid #a19f9d; border-radius: 2px; display: flex; align-items: center; padding-left: 13px; gap: 16px; }
.fsec { border-top: 1px solid #a19f9d; margin-top: 5px; padding: 20px 10px 0; }
.fsec.two { border-top: 0; margin-top: 22px; padding-top: 11px; }
.flab { display: flex; justify-content: space-between; height: 32px; line-height: 22px; letter-spacing: -0.1px; }
.flab b { font-weight: 400; margin-right: 4px; letter-spacing: 1.3px; }
.fbox { height: 57px; border: 1px solid #c8c6c4; border-radius: 2px; line-height: 56px; text-align: center; letter-spacing: -0.1px; }

.viz { width: 226px; border-left: 1px solid #d8d6d4; }
.vhead { display: flex; justify-content: space-between; align-items: center; height: 50px; padding: 0 10px; }
.bv { font-weight: 600; font-size: 14px; padding-left: 10px; line-height: 22px; margin-top: -3px; letter-spacing: -.25px; }
.modes { display: flex; padding: 3px 0 0 10px; }
.mode { width: 40px; height: 40px; background: #d2d0ce; border-radius: 2px; }
.fmt { margin: 5px 0 0 48px; }
.notch { margin-top: 5px; }
.icons { display: grid; grid-template-columns: repeat(6, 24px); grid-auto-rows: 24px; gap: 11px; padding: 13px 0 0 14px; }
.icons svg { width: 24px; height: 24px; }
.icons .k { fill: none; stroke: #3b3a39; stroke-width: 1.6; }
.kl { fill: none; stroke: #3b3a39; stroke-width: 1.4; }
.kx { fill: #fff; stroke: #3b3a39; stroke-width: 1.5; }
.gx { fill: #fff; stroke: #605e5c; stroke-width: 1.5; }
.gl { fill: none; stroke: #8a8886; stroke-width: 1.2; }
.bl { fill: none; stroke: #1b78c4; stroke-width: 1.4; }
.b { fill: #83beec; stroke: #1068b8; stroke-width: 1.3; }
.g { fill: #c8c6c4; stroke: #797775; stroke-width: 1.2; }
.w { fill: #fff; stroke: #3b3a39; stroke-width: 1.3; }
.w.gs { stroke: #797775; }
.w.bs { stroke: #1068b8; stroke-width: 1.6; }
.z { fill: #fcd58a; stroke: #e07010; stroke-width: 1.2; }
.n { font: 11.5px "Open Sans"; letter-spacing: -0.6px; fill: #2b88d0; }
.rp { font: 700 20px "Open Sans"; letter-spacing: -0.5px; fill: #1b87d0; }
.more { padding-left: 15px; height: 46px; line-height: 31px; font-size: 16px; letter-spacing: 4px; font-weight: 600; border-bottom: 1px solid #d8d6d4; }
.wells { padding: 10px 7px 0 5px; letter-spacing: -0.1px; }
.wl { padding-left: 10px; line-height: 22px; }
.well { height: 35px; margin-top: 5px; border: 1px dashed #c8c6c4; background: #fff; line-height: 33px; padding-left: 12px; border-radius: 2px; }
.dt { font-weight: 600; font-size: 14px; margin: 13px 0 3px; color: #484644; letter-spacing: 0.05px; }
.trow { display: flex; justify-content: space-between; align-items: center; height: 34px; padding: 0 20px 0 10px; }
.tog { width: 40px; height: 20px; border: 1px solid #797775; border-radius: 10px; background: #fff; display: flex; align-items: center; gap: 2px; padding-left: 5px; font-size: 11.5px; color: #605e5c; letter-spacing: -.2px; }
.tog i { width: 10px; height: 10px; border-radius: 5px; background: #605e5c; }
.tog.on { background: #117865; border-color: #117865; color: #fff; gap: 4px; }
.tog.on i { background: #fff; }
.w2 { height: 32px; margin-top: 6px; line-height: 31px; padding-left: 10px; white-space: nowrap; letter-spacing: -0.05px; }

.data { width: 225px; border-left: 1px solid #d8d6d4; }
.dh { padding-right: 9px; }
.dsearch { margin: 7px 4px 0 5px; height: 30px; background: #fff; border: 1px solid #d1d1d1; border-bottom-color: #605e5c; border-radius: 4px; display: flex; align-items: center; padding: 1px 0 0 15px; gap: 9px; font-size: 15.8px; color: #616161; }
.tree { padding: 11px 0 0 19px; }
.item { display: flex; align-items: center; height: 30px; gap: 8px; color: #3b3a39; letter-spacing: -0.3px; }

.status { height: 25px; border-top: 1px solid #d8d6d4; display: flex; align-items: center; padding: 6px 22px 0 5px; color: #484644; }
.pg { flex: 1; letter-spacing: -0.05px; }
.pct { width: 66px; padding-left: 14px; }
```
